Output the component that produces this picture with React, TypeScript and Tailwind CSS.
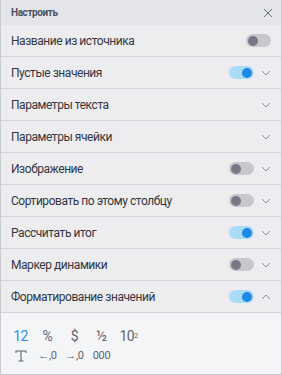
const rows: { label: string; toggle?: boolean; on?: boolean; chevron?: "down" | "up" }[] = [
  { label: "Название из источника", toggle: true, on: false },
  { label: "Пустые значения", toggle: true, on: true, chevron: "down" },
  { label: "Параметры текста", chevron: "down" },
  { label: "Параметры ячейки", chevron: "down" },
  { label: "Изображение", toggle: true, on: false, chevron: "down" },
  { label: "Сортировать по этому столбцу", toggle: true, on: false, chevron: "down" },
  { label: "Рассчитать итог", toggle: true, on: true, chevron: "down" },
  { label: "Маркер динамики", toggle: true, on: false, chevron: "down" },
  { label: "Форматирование значений", toggle: true, on: true, chevron: "up" },
];

function Toggle({ on }: { on?: boolean }) {
  return (
    <div
      className={`flex h-[13px] w-[25px] items-center rounded-full px-[2px] ${
        on ? "justify-end bg-[#a9dcf7]" : "justify-start bg-[#c7c8cc]"
      }`}
    >
      <div className={`h-[10px] w-[10px] rounded-full ${on ? "bg-[#1e88e5]" : "bg-[#767985]"}`} />
    </div>
  );
}

function Chevron({ up }: { up?: boolean }) {
  return (
    <svg width="10" height="6" viewBox="0 0 10 6" className="ml-[7px]">
      <polyline
        points={up ? "1,5 5,1 9,5" : "1,1 5,5 9,1"}
        fill="none"
        stroke="#8c8f98"
        strokeWidth="1"
      />
    </svg>
  );
}

export default function App() {
  return (
    <div className="flex h-[375px] w-[282px] flex-col border-x border-b border-[#c9cace] bg-[#ededf0] font-['Roboto','Liberation_Sans',sans-serif] text-[#333640]">
      <div className="flex h-[25px] shrink-0 items-center justify-between bg-[#e4e5e9] pl-[10px] pr-[8px]">
        <span className="text-[10px] font-bold tracking-[-0.4px] text-[#4c5160]">Настроить</span>
        <svg width="10" height="10" viewBox="0 0 10 10">
          <path d="M1 1 L9 9 M9 1 L1 9" stroke="#6b6e78" strokeWidth="1" />
        </svg>
      </div>

      {rows.map((r) => (
        <div
          key={r.label}
          className="flex h-[32px] shrink-0 items-center border-b border-[#d3d4d8] pl-[10px] pr-[10px]"
        >
          <span className="flex-1 text-[12px] tracking-[-0.45px]">{r.label}</span>
          {r.toggle && <Toggle on={r.on} />}
          {r.chevron && <Chevron up={r.chevron === "up"} />}
        </div>
      ))}

      <div className="flex flex-1 flex-col gap-[2px] bg-[#f4f5f7] pl-[6px] pt-[14px] text-[#5f6370]">
        <div className="grid grid-cols-[repeat(5,27px)] items-center justify-items-center text-[14px] leading-[18px] tracking-[-0.5px]">
          <span className="text-[#2d8fe6]">12</span>
          <span>%</span>
          <span>$</span>
          <span>½</span>
          <span>
            10<sup className="text-[7px]">2</sup>
          </span>
        </div>
        <div className="grid grid-cols-[repeat(4,27px)] items-center justify-items-center text-[11px] leading-[18px] tracking-[-0.3px]">
          <svg width="12" height="12" viewBox="0 0 12 12">
            <path d="M1 3 V1 H11 V3 M6 1 V11 M3.5 11 H8.5" fill="none" stroke="#5f6370" strokeWidth="1.1" />
          </svg>
          <span>←,0</span>
          <span>→,0</span>
          <span>000</span>
        </div>
      </div>
    </div>
  );
}
